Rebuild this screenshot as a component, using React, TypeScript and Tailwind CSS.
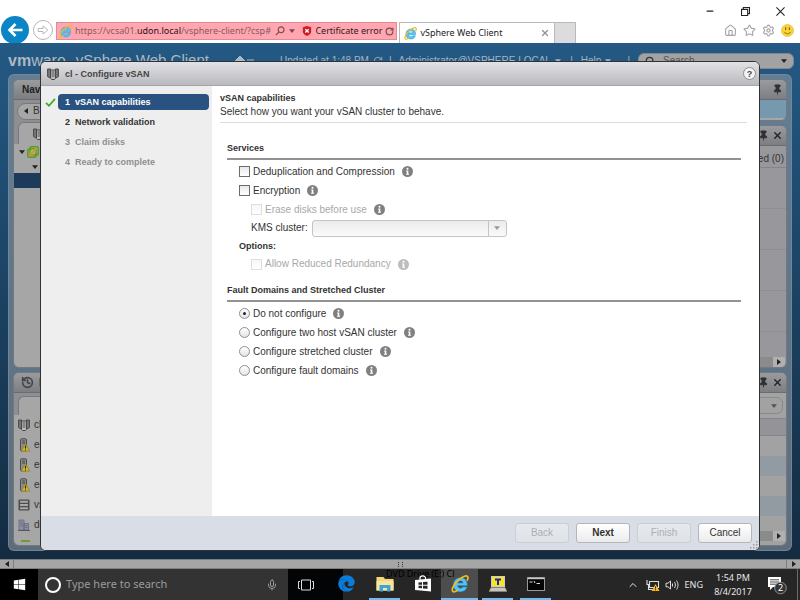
import React from 'react';
import { Home, Star, Settings, X, Minus, Pin, History, Search, Mic, ChevronUp, RotateCw } from 'lucide-react';
import { FaWindows, FaEdge } from 'react-icons/fa';

const steps = [
  { id: 1, label: 'vSAN capabilities', state: 'active' },
  { id: 2, label: 'Network validation', state: 'ready' },
  { id: 3, label: 'Claim disks', state: 'disabled' },
  { id: 4, label: 'Ready to complete', state: 'disabled' },
];

const faultOptions = [
  { id: 'none', label: 'Do not configure' },
  { id: 'twohost', label: 'Configure two host vSAN cluster' },
  { id: 'stretched', label: 'Configure stretched cluster' },
  { id: 'domains', label: 'Configure fault domains' },
];

const recentObjects = [
  { id: 1, type: 'cluster', name: 'cl' },
  { id: 2, type: 'host', name: 'esxi01' },
  { id: 3, type: 'host', name: 'esxi02' },
  { id: 4, type: 'host', name: 'esxi03' },
  { id: 5, type: 'datastore', name: 'vsan' },
  { id: 6, type: 'datacenter', name: 'dc' },
];

/* ---------- Icons ---------- */

const InfoIcon = ({ dim = false }: { dim?: boolean }) => (
  <svg viewBox="0 0 12 12" className={`w-[11px] h-[11px] ml-[7px] shrink-0 ${dim ? 'text-[#bdbdbd]' : 'text-[#808080]'}`}>
    <circle cx="6" cy="6" r="6" fill="currentColor" />
    <circle cx="6" cy="2.9" r="1.1" fill="#fff" />
    <path d="M4.500 4.800h2.400v3.600h.8v1.100H4.400V8.400h.8V5.900h-.7z" fill="#fff" />
  </svg>
);

const ClusterIcon = ({ className = '' }: { className?: string }) => (
  <svg viewBox="0 0 12 12" className={`w-3 h-3 shrink-0 ${className}`}>
    <path d="M.6 1h3v8.500h-1.500L.6 8.500zM8.400 1h3v7.500l-1.500 1H8.400z" fill="#777" stroke="#484848" strokeWidth="1" />
    <path d="M3.500 2h5v8.500l-1 1h-3l-1-1z" fill="#b9b9b9" stroke="#484848" strokeWidth="1" />
    <path d="M4.500 4h3M4.500 6h3M4.500 8h3" stroke="#484848" strokeWidth=".9" />
  </svg>
);

const HostIcon = () => (
  <svg viewBox="0 0 12 14" className="w-3 h-[14px] shrink-0">
    <rect x="2.500" y=".8" width="6" height="12" rx="1" fill="#8d8d8d" stroke="#4a4a4a" />
    <path d="M4 3h3M4 5h3" stroke="#333" strokeWidth=".8" />
    <path d="M7.500 5.200l4.200 8H3.300z" fill="#cdb52c" stroke="#85751c" strokeWidth=".6" />
    <path d="M7.500 7.800v2.800M7.500 11.400v1" stroke="#222" strokeWidth="1.100" />
  </svg>
);

const DatastoreIcon = () => (
  <svg viewBox="0 0 12 12" className="w-3 h-3 shrink-0">
    <rect x=".5" y=".5" width="11" height="11" rx="1" fill="#4c4c4c" />
    <path d="M2 2.700h8M2 6h8M2 9.300h8" stroke="#a9a9a9" strokeWidth="1.900" />
  </svg>
);

const DatacenterIcon = () => (
  <svg viewBox="0 0 12 12" className="w-3 h-3 shrink-0">
    <path d="M1 1h5v10H1zM6 4.500h4.500V11H6z" fill="#8f8fa6" stroke="#62627a" strokeWidth=".7" />
    <path d="M2.300 3h2.500M2.300 5h2.500M2.300 7h2.500M7 6.500h2.500M7 8.500h2.500" stroke="#62627a" strokeWidth=".8" />
    <path d="M0 11.500h12" stroke="#55556b" />
  </svg>
);

const VcenterIcon = () => (
  <svg viewBox="0 0 12 12" className="w-3 h-3 shrink-0">
    <rect x="3" y=".8" width="8.200" height="8.200" rx="1.500" fill="#a9b58a" stroke="#5b9c1f" strokeWidth="1.500" />
    <rect x=".8" y="3" width="8.200" height="8.200" rx="1.500" fill="none" stroke="#5b9c1f" strokeWidth="1.500" />
    <path d="M3.500 8.500l4.500-4.500M5.200 3.600h3.200v3.200M3.200 5.500v3.300h3.300" stroke="#c79a2a" strokeWidth="1.300" fill="none" />
  </svg>
);

const IeIcon = ({ className = '' }: { className?: string }) => (
  <svg viewBox="0 0 20 20" className={`shrink-0 ${className}`}>
    <path
      d="M18 11.800H7.300c.2 1.900 1.500 3 3.200 3 1.300 0 2.100-.5 2.600-1.400h4.600c-.9 3.200-3.600 5.200-7.200 5.200-4.500 0-7.700-3.100-7.700-7.600 0-4.600 3.200-7.900 7.700-7.900 4.700 0 7.700 3.300 7.500 8.700zM7.400 9h6.100c-.2-1.700-1.300-2.700-3-2.700S7.700 7.300 7.400 9z"
      fill="#55c3f5"
      stroke="#2a8fd0"
      strokeWidth=".6"
    />
    <path
      d="M18.200 5.600c.9-2 .9-3.700-.2-4.300C15.600.2 9.600 3.700 5.300 8.800 1.700 13.100.5 17.300 2.200 18.400c1 .6 2.700.1 4.600-1.200"
      fill="none"
      stroke="#f0bd1f"
      strokeWidth="1.900"
      strokeLinecap="round"
    />
  </svg>
);

const PinIcon = () => <Pin className="w-[11px] h-[11px] text-[#303030]" fill="#303030" />;

const Caret = ({ className = '' }: { className?: string }) => (
  <svg viewBox="0 0 8 5" className={`w-[6px] h-1 shrink-0 ${className}`}>
    <path d="M0 0h8L4 5z" fill="currentColor" />
  </svg>
);

const SideArrow = ({ right = false }: { right?: boolean }) => (
  <svg viewBox="0 0 4 6" className="w-1 h-[6px] shrink-0">
    <path d={right ? 'M0 0l4 3-4 3z' : 'M4 0L0 3l4 3z'} fill="#222" />
  </svg>
);

/* ---------- Browser ---------- */

const BrowserChrome = () => (
  <header className="h-[43px] bg-white flex items-end overflow-hidden font-['Noto_Sans','Open_Sans',sans-serif] text-[9px] shrink-0">
    <button aria-label="Back" className="w-7 h-7 ml-px -mb-px rounded-full bg-[#0a86c6] flex items-center justify-center shrink-0">
      <svg viewBox="0 0 16 16" className="w-4 h-4">
        <path d="M15.500 8H2.500M8.500 2l-6 6 6 6" stroke="#fff" strokeWidth="2.600" fill="none" />
      </svg>
    </button>
    <button aria-label="Forward" className="w-5 h-5 ml-1 mb-[3px] rounded-full border border-[#b5b5b5] flex items-center justify-center shrink-0">
      <svg viewBox="0 0 16 16" className="w-3 h-3">
        <path d="M1.500 6H8V2.500L14.500 8 8 13.500V10H1.500z" stroke="#b5b5b5" strokeWidth="1.300" fill="none" />
      </svg>
    </button>
    <div className="flex items-center h-[18px] mb-[3px] ml-[3px] flex-[343_1_0%] min-w-0 border border-[#e08a96] bg-[#ffa6b1] px-[2px] whitespace-nowrap">
      <IeIcon className="w-[13px] h-[13px]" />
      <span className="ml-[3px] text-[#8a5a60]">
        https://vcsa01.<span className="text-[#2b1214]">udon.local</span>/vsphere-client/?csp#
      </span>
      <svg viewBox="0 0 12 12" className="w-[10px] h-[10px] shrink-0 ml-auto">
        <circle cx="7.300" cy="4.500" r="3.500" stroke="#7a4a50" strokeWidth="1.300" fill="none" />
        <path d="M4.800 7L1 11" stroke="#7a4a50" strokeWidth="1.500" />
      </svg>
      <Caret className="ml-1 text-[#7a4a50]" />
      <svg viewBox="0 0 12 12" className="w-[10px] h-[10px] ml-[7px] shrink-0">
        <path d="M6 0l5 1.500v5C11 9 8.500 11 6 12 3.500 11 1 9 1 6.500v-5z" fill="#d01b22" />
        <path d="M4 3.800l4 4M8 3.800l-4 4" stroke="#fff" strokeWidth="1.600" />
      </svg>
      <span className="ml-[3px] text-[#33181b]">Certificate error</span>
      <RotateCw className="w-[9px] h-[9px] ml-[3px] shrink-0 text-[#7a4a50]" strokeWidth={3} />
    </div>
    <div className="h-[21px] ml-[2px] flex-[149_1_0%] min-w-0 border border-b-0 border-[#b9b9b9] bg-white flex items-center px-1 whitespace-nowrap">
      <IeIcon className="w-[13px] h-[13px]" />
      <span className="ml-[3px] flex-1 text-[#222]">vSphere Web Client</span>
      <X className="w-[10px] h-[10px] text-[#909090]" strokeWidth={3} />
    </div>
    <div className="h-[21px] w-[21px] bg-[#dcdcdc] border border-b-0 border-l-0 border-[#b9b9b9] shrink-0" />
    <div className="flex-[229_1_0%] self-stretch flex flex-col justify-between items-end">
      <div className="h-[22px] flex items-center gap-[26px] pr-[15px] text-[#222]">
        <Minus className="w-[10px] h-[10px]" strokeWidth={3} />
        <svg viewBox="0 0 10 10" className="w-[9px] h-[9px]">
          <path d="M.6 2.600h6.800v6.800H.6zM2.600 2.600V.6h6.800v6.800h-2" stroke="#222" strokeWidth="1.200" fill="none" />
        </svg>
        <svg viewBox="0 0 10 10" className="w-[9px] h-[9px]">
          <path d="M.5.5l9 9M9.500.5l-9 9" stroke="#222" strokeWidth="1.200" />
        </svg>
      </div>
      <div className="h-[21px] flex items-center gap-[6px] pr-[6px] pb-[5px] text-[#a3a3a3]">
        <Home className="w-[13px] h-[13px]" strokeWidth={2} />
        <Star className="w-[13px] h-[13px]" strokeWidth={2} />
        <Settings className="w-[13px] h-[13px]" strokeWidth={2} />
        <svg viewBox="0 0 14 14" className="w-[13px] h-[13px]">
          <circle cx="7" cy="7" r="6.500" fill="#fbd335" stroke="#d9b13b" strokeWidth=".6" />
          <path d="M5 3.500v3M9 3.500v3" stroke="#7c6320" strokeWidth="1.200" />
          <path d="M3.500 8.500c1.500 2.600 5.500 2.600 7 0" stroke="#7c6320" fill="none" />
        </svg>
      </div>
    </div>
  </header>
);

/* ---------- vSphere client behind the dialog ---------- */

const ClientHeader = () => (
  <div className="h-[31px] flex items-center pl-2 pr-[6px] pt-1 text-[10px] text-[#a3b3c0] whitespace-nowrap shrink-0">
    <span className="text-[16px] text-[#aeb9c2]"><b>vm</b>ware</span>
    <span className="ml-[10px] text-[15px] text-[#aeb9c2]">vSphere Web Client</span>
    <svg viewBox="0 0 20 10" className="w-5 h-[10px] ml-[26px] shrink-0">
      <path d="M5 0l5 5H8v4.500H2V5H0zM12 4h7M12 7h7" fill="#aeb9c2" stroke="#aeb9c2" />
    </svg>
    <span className="ml-[25px]">Updated at 1:48 PM</span>
    <RotateCw className="w-[10px] h-[10px] ml-1 shrink-0" />
    <span className="ml-[6px]">|</span>
    <button className="ml-[7px] flex items-center">Administrator@VSPHERE.LOCAL <Caret className="ml-1" /></button>
    <span className="ml-auto">|</span>
    <button className="ml-2 flex items-center">Help <Caret className="ml-1" /></button>
    <span className="ml-4 mr-2">|</span>
    <label className="w-[156px] h-4 rounded-md bg-[#a2a2a2] border border-[#7f8890] flex items-center px-[6px] text-[#444] shrink-0">
      <Search className="w-[10px] h-[10px] text-[#333] shrink-0" strokeWidth={3} />
      <input aria-label="Search" placeholder="Search" className="ml-2 flex-1 min-w-0 bg-transparent outline-none placeholder:text-[#555]" />
      <Caret className="text-[#222]" />
    </label>
  </div>
);

const PanelHeader = ({ children }: { children: React.ReactNode }) => (
  <div className="h-[20px] bg-linear-to-b from-[#9a9b9e] to-[#7d7e81] border-b border-[#6b6c70] flex items-center text-[10px] font-bold text-[#222] shrink-0">
    {children}
  </div>
);

const panelClass = 'rounded-md border border-[#75797d] overflow-hidden flex flex-col';

const HorizontalScroll = () => (
  <div className="h-[10px] mr-[1px] bg-[#8b8b8b] flex justify-end shrink-0">
    <div className="w-3 bg-[#b0b0b0] flex items-center justify-center"><SideArrow right /></div>
  </div>
);

const LeftColumn = () => (
  <div className="w-[190px] flex flex-col gap-1">
    <section className={`${panelClass} flex-1 bg-[#a6a6a6]`}>
      <PanelHeader><span className="ml-2">Navigator</span></PanelHeader>
      <div className="h-[22px] bg-[#8e8f92] flex items-center pl-[3px] shrink-0">
        <button className="h-[17px] flex items-center gap-[5px] rounded-l-full bg-[#a6a6a6] border border-[#777] pl-[6px] pr-16 text-[10px] text-[#333]">
          <SideArrow /> Back
        </button>
      </div>
      <div className="h-[22px] bg-[#8e8f92] pl-1 shrink-0">
        <div className="h-full w-20 rounded-t-md border border-b-0 border-[#75797d] bg-[#a6a6a6] flex items-center pl-[14px]">
          <ClusterIcon />
        </div>
      </div>
      <div className="h-4 flex items-center pl-[5px] gap-[2px] shrink-0">
        <Caret className="text-[#222]" />
        <VcenterIcon />
      </div>
      <div className="h-[13px] flex items-center pl-[18px] shrink-0"><Caret className="text-[#222]" /></div>
      <div className="h-[15px] bg-[#1e3a5b] shrink-0" />
    </section>
    <section className={`${panelClass} h-[174px] bg-[#a6a6a6]`}>
      <PanelHeader>
        <History className="w-[13px] h-[13px] ml-[7px] text-[#444]" strokeWidth={3} />
        <span className="ml-[5px]">Recent Objects</span>
      </PanelHeader>
      <div className="h-[22px] bg-[#8e8f92] pl-1 pt-[3px] shrink-0">
        <div className="h-full rounded-tl-md border border-b-0 border-r-0 border-[#75797d] bg-[#a6a6a6]" />
      </div>
      <ul className="text-[10px] text-[#333]">
        {recentObjects.map((obj) => (
          <li key={obj.id} className="h-[20px] flex items-center gap-1 pl-1">
            {obj.type === 'cluster' && <ClusterIcon />}
            {obj.type === 'host' && <HostIcon />}
            {obj.type === 'datastore' && <DatastoreIcon />}
            {obj.type === 'datacenter' && <DatacenterIcon />}
            <span>{obj.name}</span>
          </li>
        ))}
      </ul>
      <div className="w-[9px] h-[2px] ml-[7px] mt-[5px] bg-[#6b9c35] shrink-0" />
    </section>
  </div>
);

const RightColumn = () => (
  <div className="w-[190px] flex flex-col gap-1 ml-auto">
    <section className={`${panelClass} h-[42px] bg-[#7799ae]`}>
      <PanelHeader><span className="ml-auto mr-[3px] flex"><PinIcon /></span></PanelHeader>
      <div className="mt-auto h-[2px] bg-[#a6a6a6]" />
    </section>
    <section className={`${panelClass} flex-1 bg-[#98989c]`}>
      <PanelHeader>
        <span className="ml-auto mr-[3px] flex gap-[3px]"><PinIcon /><X className="w-[11px] h-[11px]" strokeWidth={3} /></span>
      </PanelHeader>
      <div className="h-[22px] border-b border-[#858589] flex items-center justify-end pr-[2px] pt-[4px] text-[10px] text-[#333] shrink-0">
        Acknowledged (0)
      </div>
      {[1, 2, 3, 4].map((n) => (
        <div key={n} className="h-[41px] border-b border-[#8f8f93] shrink-0" />
      ))}
      <div className="flex-1" />
      <HorizontalScroll />
    </section>
    <section className={`${panelClass} h-[174px] bg-[#a2a2a2]`}>
      <PanelHeader>
        <span className="ml-auto mr-[3px] flex gap-[3px]"><PinIcon /><X className="w-[11px] h-[11px]" strokeWidth={3} /></span>
      </PanelHeader>
      <div className="h-[25px] flex items-center justify-end pr-[3px] shrink-0">
        <div className="w-[90px] h-[17px] rounded-md border border-[#88898c] flex items-center justify-end pr-[5px]">
          <Caret className="text-[#555]" />
        </div>
      </div>
      <div className="h-[18px] bg-[#949498] border-y border-[#858589] shrink-0" />
      {[1, 2].map((n) => (
        <React.Fragment key={n}>
          <div className="h-[20px] shrink-0" />
          <div className="h-[20px] bg-[#929ba1] shrink-0" />
        </React.Fragment>
      ))}
      <div className="flex-1" />
      <HorizontalScroll />
      <div className="h-1 shrink-0" />
    </section>
  </div>
);

/* ---------- Configure vSAN dialog ---------- */

const boxClass = 'appearance-none w-[11px] h-[11px] border border-[#6c6c6c] bg-linear-to-b from-[#e9e9e9] to-white disabled:border-[#dedede] disabled:from-[#f6f6f6] shrink-0';
const radioClass = "appearance-none w-[11px] h-[11px] rounded-full border border-[#909090] bg-linear-to-b from-white to-[#e4e4e4] shrink-0 grid place-items-center checked:before:content-[''] checked:before:w-[3px] checked:before:h-[3px] checked:before:rounded-full checked:before:bg-[#222]";
const buttonClass = 'w-[54px] h-[20px] rounded-[3px] border border-[#b3b6bb] bg-linear-to-b from-white to-[#ebebeb] text-[#333] disabled:border-[#cacfd6] disabled:from-[#e6eaee] disabled:to-[#dfe3e8] disabled:text-[#abb0b6]';

type CheckRowProps = { id: string; label: string; disabled?: boolean; dimInfo?: boolean };

const CheckRow = ({ id, label, disabled = false, dimInfo = false }: CheckRowProps) => (
  <div className={`flex items-center ${disabled ? 'pl-6 text-[#a8a8a8]' : 'pl-3'} ${dimInfo ? 'h-[18px]' : 'h-[19px]'}`}>
    <input type="checkbox" id={id} disabled={disabled} className={boxClass} />
    <label htmlFor={id} className="ml-[3px]">{label}</label>
    <InfoIcon dim={dimInfo} />
  </div>
);

const WizardSteps = () => (
  <nav className="w-[171px] bg-[#eeeeee] pt-[6px] pr-[3px] shrink-0">
    <ol>
      {steps.map((step) => (
        <li key={step.id} className="h-[20px] flex items-center font-bold text-[9px]">
          <span className="w-[17px] pl-1 shrink-0">
            {step.state === 'active' && (
              <svg viewBox="0 0 12 10" className="w-[11px] h-[9px]">
                <path d="M1 5.500L4.300 8.600 11 1" stroke="#3fae29" strokeWidth="2" fill="none" />
              </svg>
            )}
          </span>
          <span
            className={`flex-1 h-4 flex items-center gap-[5px] pl-[7px] rounded ${
              step.state === 'active' ? 'bg-[#2a5280] text-white' :
              step.state === 'ready' ? 'text-[#333]' : 'text-[#8f8f8f]'
            }`}
          >
            <span>{step.id}</span>
            <span>{step.label}</span>
          </span>
        </li>
      ))}
    </ol>
  </nav>
);

const SectionTitle = ({ children }: { children: React.ReactNode }) => (
  <h3 className="font-bold text-[9px] pb-[3px] border-b-2 border-[#929292] mb-[2px]">{children}</h3>
);

const ConfigureDialog = () => {
  const [fault, setFault] = React.useState('none');

  return (
    <div
      role="dialog"
      aria-labelledby="dialog-title"
      className="absolute inset-x-10 top-[18px] bottom-2 rounded-md border border-[#2e3338] bg-white overflow-hidden flex flex-col text-[10px] leading-[14px] text-[#333]"
    >
      <div className="h-6 bg-linear-to-b from-[#e2e2e6] to-[#b9babe] border-b border-[#a5a6aa] flex items-center pl-[6px] pr-[3px] shrink-0">
        <ClusterIcon />
        <h1 id="dialog-title" className="ml-[6px] flex-1 font-bold text-[9px] text-[#444]">cl - Configure vSAN</h1>
        <button aria-label="Help" className="w-[13px] h-[13px] rounded-full bg-[#f4f4f4] border border-[#8d8d8d] flex items-center justify-center font-bold text-[9px] text-[#444]">?</button>
      </div>

      <div className="flex flex-1 min-h-0">
        <WizardSteps />
        <div className="flex-1 pl-2 pr-3 pt-[5px]">
          <h2 className="font-bold text-[9px]">vSAN capabilities</h2>
          <p className="pb-[3px] border-b border-[#dcdcdc]">Select how you want your vSAN cluster to behave.</p>

          <div className="pl-[7px] pr-[6px] pt-[18px]">
            {/* Services */}
            <SectionTitle>Services</SectionTitle>
            <CheckRow id="dedup" label="Deduplication and Compression" />
            <CheckRow id="encryption" label="Encryption" />
            <CheckRow id="erase" label="Erase disks before use" disabled />
            <div className="h-[18px] flex items-center pl-6">
              <label htmlFor="kms">KMS cluster:</label>
              <div className="relative ml-1 w-[195px] h-[17px]">
                <select id="kms" disabled className="appearance-none w-full h-full rounded-[3px] border border-[#c4c4c4] bg-linear-to-b from-[#ececec] to-[#fafafa]">
                  <option></option>
                </select>
                <span className="absolute right-px inset-y-px w-[18px] border-l border-[#c4c4c4] flex items-center justify-center pointer-events-none">
                  <Caret className="text-[#999]" />
                </span>
              </div>
            </div>
            <div className="h-[18px] flex items-center pl-3 font-bold text-[9px]">Options:</div>
            <CheckRow id="redundancy" label="Allow Reduced Redundancy" disabled dimInfo />

            {/* Fault domains */}
            <div className="pt-[10px]">
              <SectionTitle>Fault Domains and Stretched Cluster</SectionTitle>
              {faultOptions.map((option) => (
                <div key={option.id} className="h-[19px] flex items-center pl-3">
                  <input
                    type="radio"
                    id={option.id}
                    name="fault"
                    checked={fault === option.id}
                    onChange={() => setFault(option.id)}
                    className={radioClass}
                  />
                  <label htmlFor={option.id} className="ml-[3px]">{option.label}</label>
                  <InfoIcon />
                </div>
              ))}
            </div>
          </div>
        </div>
      </div>

      <div className="relative h-[34px] bg-[#d9dde5] flex items-center justify-end gap-[7px] pr-[7px] shrink-0">
        <button disabled className={buttonClass}>Back</button>
        <button className={`${buttonClass} font-bold`}>Next</button>
        <button disabled className={buttonClass}>Finish</button>
        <button className={buttonClass}>Cancel</button>
        <svg viewBox="0 0 8 8" className="absolute right-px bottom-px w-2 h-2">
          <path d="M6 0h1.500v1.500H6zM6 3h1.500v1.500H6zM3 3h1.500v1.500H3zM6 6h1.500v1.500H6zM3 6h1.500v1.500H3zM0 6h1.500v1.500H0z" fill="#9a9da3" />
        </svg>
      </div>
    </div>
  );
};

/* ---------- Taskbar ---------- */

const taskClass = 'h-full flex items-center justify-center border-b-2';

const Taskbar = () => (
  <footer className="h-[31px] bg-[#262626] flex items-stretch font-['Noto_Sans','Open_Sans',sans-serif] text-[9px] text-[#e6e6e6] shrink-0">
    <button aria-label="Start" className="w-[38px] bg-black flex items-center justify-center">
      <FaWindows className="w-[13px] h-[13px] text-white" />
    </button>
    <label className="w-[250px] bg-[#333] flex items-center pl-[7px] pr-[10px]">
      <span className="w-4 h-4 rounded-full border-2 border-white shrink-0" />
      <input placeholder="Type here to search" className="ml-[5px] flex-1 min-w-0 bg-transparent outline-none text-[11px] placeholder:text-[#9b9b9b]" />
      <Mic className="w-3 h-[14px] text-[#9b9b9b]" />
    </label>
    <div className="w-[40px] bg-[#020406] flex items-center pl-[10px]">
      <button aria-label="Task View">
        <svg viewBox="0 0 16 12" className="w-4 h-3">
          <path d="M3.500 1h9v10h-9zM2 2.500H.5v7H2M14 2.500h1.500v7H14" stroke="#ddd" fill="none" />
        </svg>
      </button>
    </div>
    <div className="relative flex">
      <span className="absolute left-[58px] top-0 leading-none text-black whitespace-nowrap pointer-events-none">DVD Drive (E:) Cl</span>
      <button aria-label="Edge" className={`${taskClass} w-[37px] border-transparent bg-linear-to-r from-[#020406] from-40% to-[#262626] to-40%`}>
        <FaEdge className="w-[17px] h-[17px] text-[#0a7ddb]" />
      </button>
      <button aria-label="File Explorer" className={`${taskClass} w-[31px] mx-[4px] border-[#76b9ed]`}>
        <svg viewBox="0 0 18 16" className="relative w-[18px] h-4">
          <path d="M.5 1h7l1.500 2h8.500v11.500H.5z" fill="#f5d67b" />
          <path d="M.5 5h17v9.500H.5z" fill="#fbe59a" />
          <path d="M3.500 15.500V9h11v6.500H11V12H7v3.500z" fill="#3ba5e0" />
        </svg>
      </button>
      <button aria-label="Store" className={`${taskClass} w-[37px] border-transparent`}>
        <svg viewBox="0 0 18 18" className="relative w-[18px] h-[18px]">
          <path d="M1 5l16-1.500V16.500L1 15z" fill="#fff" />
          <path d="M6 5V3c0-2.500 5.500-3 5.500 0v1.500" stroke="#fff" strokeWidth="1.200" fill="none" />
          <path d="M4.500 7.500l3.500-.3v2.600H4.500zM9 7.100l4.500-.4v3.100H9zM4.500 10.700H8v2.600l-3.500-.3zM9 10.700h4.500v3.100L9 13.400z" fill="#262626" />
        </svg>
      </button>
      <button aria-label="Internet Explorer" className={`${taskClass} w-[37px] border-[#76b9ed] bg-[#4d4d4d]`}>
        <IeIcon className="relative w-[18px] h-[18px]" />
      </button>
      <button aria-label="Terminal" className={`${taskClass} w-[31px] mx-[4px] border-[#76b9ed]`}>
        <svg viewBox="0 0 18 16" className="w-[18px] h-4">
          <rect x="2.500" y=".5" width="13" height="10" fill="#f7e526" stroke="#ccc" />
          <path d="M6 3.500h6M9 3v6" stroke="#2323a8" strokeWidth="2" />
          <path d="M2 11.500h14l2 4H0z" fill="#c9c6b8" stroke="#8b8878" strokeWidth=".6" />
        </svg>
      </button>
      <button aria-label="Command Prompt" className={`${taskClass} w-[31px] ml-[3px] border-[#76b9ed]`}>
        <svg viewBox="0 0 18 14" className="w-[18px] h-[14px]">
          <rect x=".5" y=".5" width="17" height="13" fill="#050505" stroke="#999" />
          <path d="M1 1.500h16" stroke="#ccc" strokeWidth="1.400" />
          <path d="M2.500 5h3M7 4l1 2M9.500 6.500h3.500" stroke="#ddd" />
        </svg>
      </button>
    </div>
    <div className="ml-auto flex items-center">
      <ChevronUp className="w-3 h-3" />
      <svg viewBox="0 0 14 12" className="w-[14px] h-3 ml-[7px]">
        <path d="M3.500 2.500h9v6h-9zM1 1v4.500h2M2.500 5.500v5h4" stroke="#ddd" strokeWidth="1.100" fill="none" />
        <path d="M9.500 5l4 7h-8z" fill="#f5b81c" />
        <path d="M9.500 7.500v2M9.500 10.300v1" stroke="#222" />
      </svg>
      <svg viewBox="0 0 14 12" className="w-[14px] h-3 ml-[5px]">
        <path d="M1 4.200h2L5.500 2v8L3 7.800H1zM7.500 4.500v3M9.500 3c1.200 1.800 1.200 4.200 0 6M11.500 1.500c2 2.800 2 6.200 0 9" stroke="#ddd" fill="none" />
      </svg>
      <span className="ml-[6px]">ENG</span>
      <div className="w-[44px] ml-2 text-center leading-[14px] whitespace-nowrap">
        <div>1:54 PM</div>
        <div>8/4/2017</div>
      </div>
      <button aria-label="Notifications" className="ml-3">
        <svg viewBox="0 0 20 20" className="w-5 h-5">
          <path d="M1 2h13v10H6l-3 3v-3H1z" fill="#fff" />
          <path d="M3 4.800h9M3 7h9M3 9.200h9" stroke="#333" strokeWidth=".9" />
          <circle cx="13.500" cy="13" r="5.800" fill="#333" stroke="#999" strokeWidth=".9" />
          <text x="13.500" y="16.200" fontSize="9" textAnchor="middle" fill="#fff">2</text>
        </svg>
      </button>
      <div className="w-px h-full bg-[#6b6b6b] ml-[10px] mr-[2px]" />
    </div>
  </footer>
);

const App = () => {
  return (
    <div className="h-screen flex flex-col overflow-hidden">
      <BrowserChrome />
      <main className="relative flex-1 min-h-0 flex flex-col bg-linear-to-b from-[#235984] to-[#142c42] font-['Liberation_Sans',Arial,sans-serif]">
        <ClientHeader />
        <div className="flex-1 min-h-0 mx-2 mb-2 p-1 rounded-md border border-[#7d8c99]/70 bg-[#8c99a5]/60 flex leading-[14px]">
          <LeftColumn />
          <RightColumn />
        </div>
        <ConfigureDialog />
      </main>
      <div className="h-[10px] bg-[#a6a6a6] border-y border-[#7f7f7f] flex items-center justify-between shrink-0">
        <span className="w-[14px] h-full border-r border-[#7f7f7f] flex items-center justify-center"><SideArrow /></span>
        <svg viewBox="0 0 5 5" className="w-[5px] h-[5px]">
          <path d="M0 0h1v1H0zM4 0h1v1H4zM0 2h1v1H0zM4 2h1v1H4zM0 4h1v1H0zM4 4h1v1H4z" fill="#333" />
        </svg>
        <span className="w-[14px] h-full border-l border-[#7f7f7f] flex items-center justify-center"><SideArrow right /></span>
      </div>
      <Taskbar />
    </div>
  );
};

export default App;
